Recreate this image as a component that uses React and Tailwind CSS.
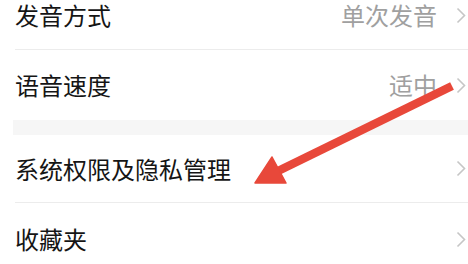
import React from 'react'

const font = { fontFamily: '"Noto Sans CJK SC", "Noto Sans", sans-serif' }

function Chevron() {
  return (
    <svg width="10" height="17" viewBox="0 0 10 17" className="shrink-0">
      <polyline points="1.5,1.5 8.5,8.5 1.5,15.5" fill="none" stroke="#c6c6c6" strokeWidth="1.6" strokeLinejoin="miter" />
    </svg>
  )
}

function Row({ label, value, height, divider }) {
  return (
    <div className={`flex items-center pl-[15px] pr-[2px] ${height} ${divider ? 'border-b border-[#ececec]' : ''}`}>
      <span className="flex-1 text-[24px] leading-none text-[#151515]">{label}</span>
      {value && <span className="text-[24px] leading-none text-[#a0a0a0] mr-[19px]">{value}</span>}
      <Chevron />
    </div>
  )
}

export default function App() {
  return (
    <div className="relative w-[468px] h-[264px] overflow-hidden bg-white" style={font}>
      <div className="-mt-[19px]">
        <div className="ml-[15px] border-b border-[#ececec]">
          <div className="flex items-center h-[68px] pr-[2px]">
            <span className="flex-1 text-[24px] leading-none text-[#151515]">发音方式</span>
            <span className="text-[24px] leading-none text-[#a0a0a0] mr-[19px]">单次发音</span>
            <Chevron />
          </div>
        </div>
        <div className="flex items-center h-[70px] pl-[15px] pr-[2px]">
          <span className="flex-1 text-[24px] leading-none text-[#151515]">语音速度</span>
          <span className="text-[24px] leading-none text-[#a0a0a0] mr-[19px]">适中</span>
          <Chevron />
        </div>
        <div className="ml-[13px] h-[15px] bg-[#f6f6f6]" />
        <div className="ml-[15px] border-b border-[#ececec]">
          <div className="flex items-center h-[67px] pr-[2px]">
            <span className="flex-1 text-[24px] leading-none text-[#151515]">系统权限及隐私管理</span>
            <Chevron />
          </div>
        </div>
        <div className="flex items-center h-[72px] pl-[15px] pr-[2px]">
          <span className="flex-1 text-[24px] leading-none text-[#151515]">收藏夹</span>
          <Chevron />
        </div>
      </div>

      {/* red annotation arrow */}
      <svg className="absolute left-0 top-0 pointer-events-none" width="468" height="264" viewBox="0 0 468 264">
        <line x1="452" y1="86" x2="276" y2="172" stroke="#e8483a" strokeWidth="8.5" strokeLinecap="butt" />
        <polygon points="255,183 272,157 286,183" fill="#e8483a" stroke="#e8483a" strokeWidth="1.5" strokeLinejoin="round" />
      </svg>
    </div>
  )
}
